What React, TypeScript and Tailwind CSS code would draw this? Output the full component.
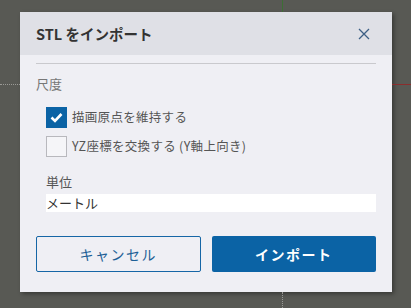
import React from "react";

const font = { fontFamily: '"Noto Sans CJK JP", "Noto Sans", sans-serif' };

function CheckRow({ checked, label }: { checked?: boolean; label: string }) {
  return (
    <div className="flex items-center h-[21px]">
      {checked ? (
        <div className="w-[21px] h-[21px] bg-[#0b63a5] flex items-center justify-center">
          <svg width="13" height="11" viewBox="0 0 13 11">
            <path d="M1.5 5.5 L5 9 L11.5 2" fill="none" stroke="#fff" strokeWidth="2.6" />
          </svg>
        </div>
      ) : (
        <div className="w-[21px] h-[21px] bg-[#f5f5f8] border border-[#b8b8bd]" />
      )}
      <span className="ml-[5px] text-[12.5px] text-[#555] tracking-[0.3px]">{label}</span>
    </div>
  );
}

export default function App() {
  return (
    <div className="relative w-[411px] h-[308px] bg-[#585954] overflow-hidden pt-[12px] pl-[20px]" style={font}>
      {/* canvas axes behind the dialog */}
      <div className="absolute left-[282px] top-0 w-px h-[12px] bg-[#3d6e35]" />
      <div className="absolute left-0 top-[84px] w-[20px] border-t border-dotted border-[#9a9a96]" />
      <div className="absolute left-[392px] top-[84px] w-[19px] h-px bg-[#8b2d2d]" />
      <div className="absolute left-[282px] top-[292px] h-[16px] border-l border-dotted border-[#9a9a96]" />

      <div className="w-[372px] h-[280px] bg-[#efeff4] flex flex-col shadow-[2px_2px_4px_rgba(0,0,0,0.35)]">
        <div className="h-[43px] bg-[#dfe0e6] flex items-center justify-between pl-4 pr-[22px]">
          <span className="text-[14.5px] font-bold text-[#333]">STL をインポート</span>
          <svg width="12" height="12" viewBox="0 0 12 12">
            <path d="M1 1 L11 11 M11 1 L1 11" stroke="#3d5f85" strokeWidth="1.3" />
          </svg>
        </div>

        <div className="px-4 flex flex-col">
          <div className="mt-[8px] border-t border-[#c9c9cd]" />
          <div className="mt-[11px] text-[13px] leading-[18px] text-[#777]">尺度</div>

          <div className="pl-[10px] mt-[14px] flex flex-col gap-[8px]">
            <CheckRow checked label="描画原点を維持する" />
            <CheckRow label="YZ座標を交換する (Y軸上向き)" />
          </div>

          <div className="pl-[10px] mt-[16px] text-[13px] leading-[18px] text-[#555]">単位</div>
          <div className="ml-[10px] mt-[3px] h-[18px] bg-white flex items-center text-[13px] text-[#333]">
            メートル
          </div>

          <div className="mt-[24px] flex gap-[11px]">
            <button className="w-[165px] h-[36px] border border-[#1666a6] rounded-[2px] text-[#1d5f96] text-[14px] tracking-[1.5px]">
              キャンセル
            </button>
            <button className="w-[165px] h-[36px] bg-[#0b63a5] rounded-[2px] text-white text-[14px] font-bold tracking-[1.5px]">
              インポート
            </button>
          </div>
        </div>
      </div>
    </div>
  );
}
